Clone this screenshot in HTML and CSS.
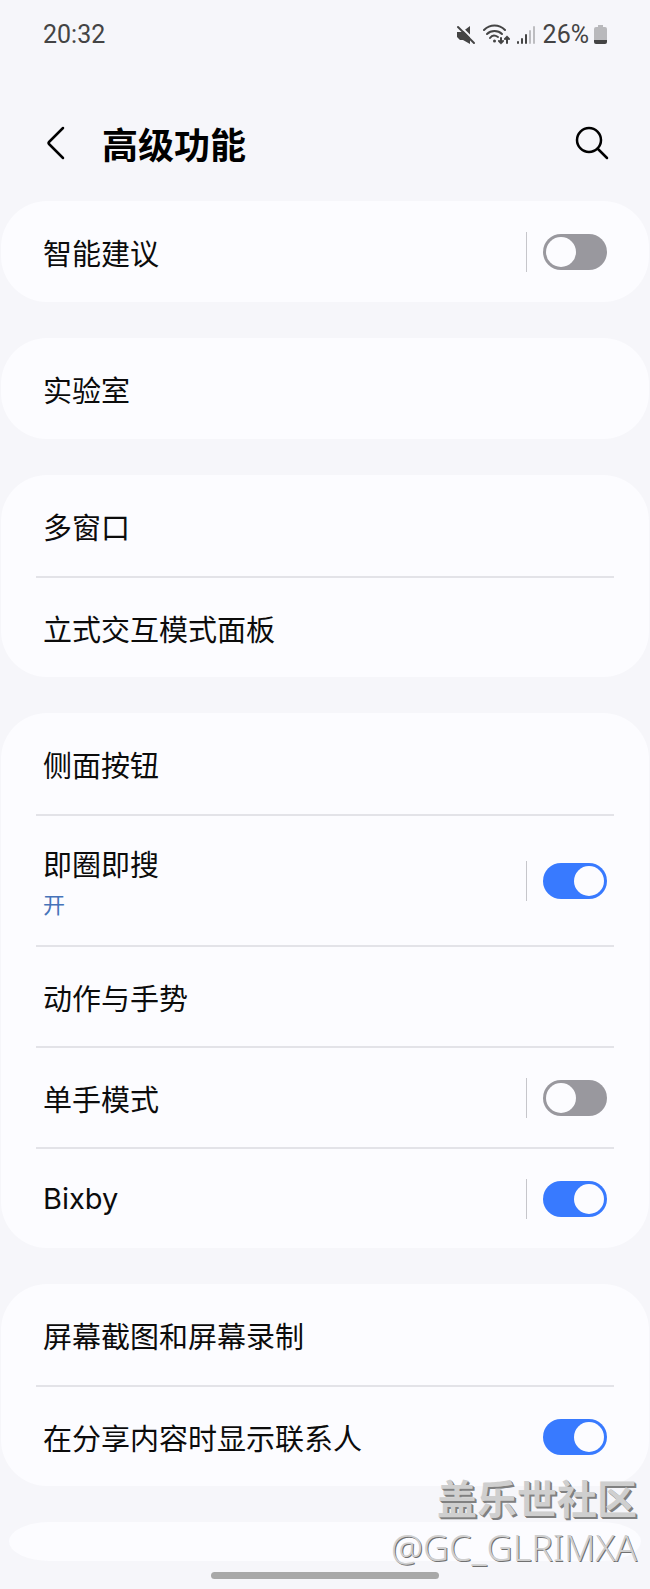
FILE: index.html
```html
<!DOCTYPE html>
<html lang="zh-CN">
<head>
  <meta charset="UTF-8" />
  <meta name="viewport" content="width=device-width, initial-scale=1.0" />
  <title>高级功能</title>
  <link rel="stylesheet" href="styles.css">
</head>
<body>
  <div class="screen">
    <div class="status-bar">
      <span>20:32</span>
      <div class="status-icons">
        <svg class="icon-mute" width="20" height="20" viewBox="0 0 20 20">
          <path d="M1 7h5L14 1v18l-7-4H4l-3-3z" fill="#444"/>
          <path d="M3 0l17 17" stroke="#f6f6fa" stroke-width="2"/>
          <path d="M2 2l16 16" stroke="#444" stroke-width="2" stroke-linecap="round"/>
        </svg>
        <svg class="icon-wifi" width="27" height="21" viewBox="0 0 27 21">
          <g fill="none" stroke="#444" stroke-width="2" stroke-linecap="round">
            <path d="M1 6C7 0 16 0 22 6"/>
            <path d="M4 10c4-4 11-4 15 0"/>
            <path d="M7 14c2-3 5-3 8-1"/>
            <path d="M18 14v5M16 17l2 2 2-2M24 19v-5M22 15l2-2 2 2"/>
          </g>
          <circle cx="11.500" cy="17" r="1.500" fill="#444"/>
        </svg>
        <svg class="icon-signal" width="18" height="18" viewBox="0 0 18 18">
          <g fill="#444">
            <rect x="0" y="15" width="2" height="3" rx="1"/>
            <rect x="4" y="12" width="2" height="6" rx="1"/>
            <rect x="8" y="8" width="2" height="10" rx="1"/>
          </g>
          <g fill="#bdbdc0">
            <rect x="12" y="4" width="2" height="14" rx="1"/>
            <rect x="16" y="0" width="2" height="18" rx="1"/>
          </g>
        </svg>
        <span>26%</span>
        <svg class="icon-battery" width="13" height="19" viewBox="0 0 13 19">
          <path d="M4 0h5v2h2a2 2 0 0 1 2 2v11H0V4a2 2 0 0 1 2-2h2z" fill="#b9b9bc"/>
          <path d="M0 15h13v2a2 2 0 0 1-2 2H2a2 2 0 0 1-2-2z" fill="#444"/>
        </svg>
      </div>
    </div>

    <header class="header">
      <button class="icon-btn" aria-label="返回">
        <svg width="20" height="34" viewBox="0 0 20 34">
          <path d="M17 2L3 16q-1 1 0 2l14 14" fill="none" stroke="#000" stroke-width="2.500" stroke-linecap="round"/>
        </svg>
      </button>
      <h1>高级功能</h1>
      <button class="icon-btn" aria-label="搜索">
        <svg width="34" height="34" viewBox="0 0 34 34">
          <g fill="none" stroke="#000" stroke-width="2.500" stroke-linecap="round">
            <circle cx="14" cy="14" r="12"/>
            <path d="M23 23l9 9"/>
          </g>
        </svg>
      </button>
    </header>

    <main class="cards">
      <section class="card">
        <div class="row">
          <label for="suggest">智能建议</label>
          <span class="split"></span>
          <input type="checkbox" id="suggest" class="switch">
        </div>
      </section>

      <section class="card">
        <a href="#" class="row">实验室</a>
      </section>

      <section class="card">
        <a href="#" class="row">多窗口</a>
        <a href="#" class="row">立式交互模式面板</a>
      </section>

      <section class="card">
        <a href="#" class="row">侧面按钮</a>
        <div class="row row-tall">
          <label for="circle">即圈即搜<small>开</small></label>
          <span class="split"></span>
          <input type="checkbox" id="circle" class="switch" checked>
        </div>
        <a href="#" class="row">动作与手势</a>
        <div class="row">
          <label for="onehand">单手模式</label>
          <span class="split"></span>
          <input type="checkbox" id="onehand" class="switch">
        </div>
        <div class="row">
          <label for="bixby" class="latin">Bixby</label>
          <span class="split"></span>
          <input type="checkbox" id="bixby" class="switch" checked>
        </div>
      </section>

      <section class="card">
        <a href="#" class="row">屏幕截图和屏幕录制</a>
        <div class="row">
          <label for="contacts">在分享内容时显示联系人</label>
          <input type="checkbox" id="contacts" class="switch" checked>
        </div>
      </section>

      <div class="card-peek"></div>
    </main>

    <div class="home-bar"></div>

    <div class="watermark">
      <div class="community">盖乐世社区</div>
      <div class="author">@GC_GLRIMXA</div>
    </div>
  </div>
</body>
</html>
```

FILE: styles.css
```css
* {
  box-sizing: border-box;
}
body {
  margin: 0;
  background: #f6f6fa;
  color: #0c0c0c;
  font-family: 'Noto Sans CJK SC', sans-serif;
}
.screen {
  position: relative;
}

/* status bar */
.status-bar {
  display: flex;
  justify-content: space-between;
  align-items: center;
  height: 69px;
  padding: 0 43px;
  color: #444;
  font-family: Roboto, sans-serif;
  font-size: 25px;
}
.status-icons {
  display: flex;
  align-items: center;
}
.icon-wifi {
  margin-left: 7px;
}
.icon-signal {
  margin: 0 8px 0 7px;
}
.icon-battery {
  margin-left: 5px;
}

/* title row */
.header {
  display: flex;
  align-items: center;
  height: 132px;
  padding: 16px 41px 0 46px;
}
.header h1 {
  flex: 1;
  margin: 0 0 0 36px;
  color: #000;
  font-size: 36px;
  font-weight: 600;
  line-height: 44px;
}
.icon-btn {
  display: flex;
  padding: 0;
  border: none;
  background: none;
  cursor: pointer;
}

/* setting groups */
.cards {
  display: flex;
  flex-direction: column;
  gap: 36px;
}
.card {
  margin: 0 1px;
  padding: 0 35px;
  border-radius: 46px;
  background: #fcfcff;
}
.row {
  display: flex;
  align-items: center;
  min-height: 101px;
  padding: 0 7px;
  color: inherit;
  font-size: 29px;
  line-height: 40px;
  text-decoration: none;
}
.row + .row {
  border-top: 2px solid #e3e3e8;
}
.row-tall {
  min-height: 131px;
}
.row label {
  flex: 1;
}
.row-tall label {
  padding-top: 4px;
}
.latin {
  font-family: Inter, sans-serif;
}
.row small {
  display: block;
  color: #4673b9;
  font-size: 22px;
}
.split {
  width: 1px;
  height: 40px;
  margin-right: 16px;
  background: #c6c6cb;
}
.switch {
  appearance: none;
  display: flex;
  width: 64px;
  height: 36px;
  margin: 0;
  padding: 3px;
  border-radius: 18px;
  background: #99989e;
  cursor: pointer;
}
.switch::before {
  content: '';
  width: 30px;
  height: 30px;
  border-radius: 50%;
  background: #fcfcff;
}
.switch:checked {
  justify-content: flex-end;
  background: #387aff;
}
.card-peek {
  height: 39px;
  margin: 0 9px;
  border-radius: 42px / 20px;
  background: #fcfcff;
}

.home-bar {
  width: 35%;
  height: 7px;
  margin: 11px auto 10px;
  border-radius: 4px;
  background: #a8a8a8;
}

/* forum stamp over the page corner */
.watermark {
  position: absolute;
  right: 13px;
  bottom: 6px;
  color: #cfcfcf;
  text-align: right;
  text-shadow: 1px 1px 0 #808080, 2px 2px 0 #808080;
  pointer-events: none;
}
.community {
  font-size: 40px;
  font-weight: 700;
  line-height: 52px;
}
.author {
  font-family: 'Noto Sans', sans-serif;
  font-size: 36px;
  font-weight: 300;
  line-height: 50px;
  text-shadow: 1px 1px 0 #707070;
}
```
